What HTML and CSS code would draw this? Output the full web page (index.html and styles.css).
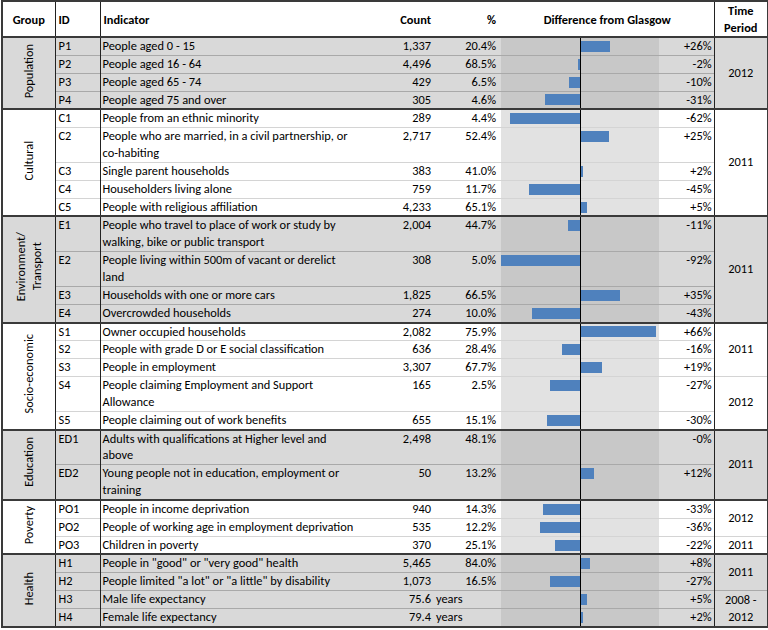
FILE: index.html
```html
<!DOCTYPE html>
<html>
<head>
<meta charset="utf-8">
<link rel="stylesheet" href="styles.css">
</head>
<body>
<table class="tbl">
<colgroup>
<col class="c-group"><col class="c-id"><col class="c-ind"><col class="c-count"><col class="c-pct"><col class="c-neg"><col class="c-pos"><col class="c-diff"><col class="c-time">
</colgroup>
<thead>
<tr class="head">
<th class="h-group">Group</th>
<th class="h-id">ID</th>
<th class="h-ind">Indicator</th>
<th class="h-num">Count</th>
<th class="h-pct">%</th>
<th class="h-diff" colspan="3">Difference from Glasgow</th>
<th class="h-time">Time<br>Period</th>
</tr>
</thead>

<tbody class="grp gray">
<tr><td class="grpname" rowspan="4"><span class="vt">Population</span></td><td class="id">P1</td><td class="ind">People aged 0 - 15</td><td class="num">1,337</td><td class="pct">20.4%</td><td class="neg"><div class="bw"></div></td><td class="pos"><div class="bw"><span class="bar" style="width:29px"></span></div></td><td class="diff">+26%</td><td class="time" rowspan="4">2012</td></tr>
<tr><td class="id">P2</td><td class="ind">People aged 16 - 64</td><td class="num">4,496</td><td class="pct">68.5%</td><td class="neg"><div class="bw"><span class="bar" style="width:2px"></span></div></td><td class="pos"><div class="bw"></div></td><td class="diff">-2%</td></tr>
<tr><td class="id">P3</td><td class="ind">People aged 65 - 74</td><td class="num">429</td><td class="pct">6.5%</td><td class="neg"><div class="bw"><span class="bar" style="width:11px"></span></div></td><td class="pos"><div class="bw"></div></td><td class="diff">-10%</td></tr>
<tr><td class="id">P4</td><td class="ind">People aged 75 and over</td><td class="num">305</td><td class="pct">4.6%</td><td class="neg"><div class="bw"><span class="bar" style="width:35px"></span></div></td><td class="pos"><div class="bw"></div></td><td class="diff">-31%</td></tr>
</tbody>

<tbody class="grp white">
<tr><td class="grpname" rowspan="5"><span class="vt">Cultural</span></td><td class="id">C1</td><td class="ind">People from an ethnic minority</td><td class="num">289</td><td class="pct">4.4%</td><td class="neg"><div class="bw"><span class="bar" style="width:70px"></span></div></td><td class="pos"><div class="bw"></div></td><td class="diff">-62%</td><td class="time" rowspan="5">2011</td></tr>
<tr><td class="id">C2</td><td class="ind">People who are married, in a civil partnership, or<br>co-habiting</td><td class="num">2,717</td><td class="pct">52.4%</td><td class="neg"><div class="bw"></div></td><td class="pos"><div class="bw"><span class="bar" style="width:28px"></span></div></td><td class="diff">+25%</td></tr>
<tr><td class="id">C3</td><td class="ind">Single parent households</td><td class="num">383</td><td class="pct">41.0%</td><td class="neg"><div class="bw"></div></td><td class="pos"><div class="bw"><span class="bar" style="width:2px"></span></div></td><td class="diff">+2%</td></tr>
<tr><td class="id">C4</td><td class="ind">Householders living alone</td><td class="num">759</td><td class="pct">11.7%</td><td class="neg"><div class="bw"><span class="bar" style="width:51px"></span></div></td><td class="pos"><div class="bw"></div></td><td class="diff">-45%</td></tr>
<tr><td class="id">C5</td><td class="ind">People with religious affiliation</td><td class="num">4,233</td><td class="pct">65.1%</td><td class="neg"><div class="bw"></div></td><td class="pos"><div class="bw"><span class="bar" style="width:6px"></span></div></td><td class="diff">+5%</td></tr>
</tbody>

<tbody class="grp gray">
<tr><td class="grpname" rowspan="4"><span class="vt">Environment/<br>Transport</span></td><td class="id">E1</td><td class="ind">People who travel to place of work or study by<br>walking, bike or public transport</td><td class="num">2,004</td><td class="pct">44.7%</td><td class="neg"><div class="bw"><span class="bar" style="width:12px"></span></div></td><td class="pos"><div class="bw"></div></td><td class="diff">-11%</td><td class="time" rowspan="4">2011</td></tr>
<tr><td class="id">E2</td><td class="ind">People living within 500m of vacant or derelict<br>land</td><td class="num">308</td><td class="pct">5.0%</td><td class="neg"><div class="bw"><span class="bar" style="width:79px"></span></div></td><td class="pos"><div class="bw"></div></td><td class="diff">-92%</td></tr>
<tr><td class="id">E3</td><td class="ind">Households with one or more cars</td><td class="num">1,825</td><td class="pct">66.5%</td><td class="neg"><div class="bw"></div></td><td class="pos"><div class="bw"><span class="bar" style="width:39px"></span></div></td><td class="diff">+35%</td></tr>
<tr><td class="id">E4</td><td class="ind">Overcrowded households</td><td class="num">274</td><td class="pct">10.0%</td><td class="neg"><div class="bw"><span class="bar" style="width:48px"></span></div></td><td class="pos"><div class="bw"></div></td><td class="diff">-43%</td></tr>
</tbody>

<tbody class="grp white">
<tr><td class="grpname" rowspan="5"><span class="vt">Socio-economic</span></td><td class="id">S1</td><td class="ind">Owner occupied households</td><td class="num">2,082</td><td class="pct">75.9%</td><td class="neg"><div class="bw"></div></td><td class="pos"><div class="bw"><span class="bar" style="width:75px"></span></div></td><td class="diff">+66%</td><td class="time" rowspan="3">2011</td></tr>
<tr><td class="id">S2</td><td class="ind">People with grade D or E social classification</td><td class="num">636</td><td class="pct">28.4%</td><td class="neg"><div class="bw"><span class="bar" style="width:18px"></span></div></td><td class="pos"><div class="bw"></div></td><td class="diff">-16%</td></tr>
<tr><td class="id">S3</td><td class="ind">People in employment</td><td class="num">3,307</td><td class="pct">67.7%</td><td class="neg"><div class="bw"></div></td><td class="pos"><div class="bw"><span class="bar" style="width:21px"></span></div></td><td class="diff">+19%</td></tr>
<tr><td class="id">S4</td><td class="ind">People claiming Employment and Support<br>Allowance</td><td class="num">165</td><td class="pct">2.5%</td><td class="neg"><div class="bw"><span class="bar" style="width:30px"></span></div></td><td class="pos"><div class="bw"></div></td><td class="diff">-27%</td><td class="time" rowspan="2">2012</td></tr>
<tr><td class="id">S5</td><td class="ind">People claiming out of work benefits</td><td class="num">655</td><td class="pct">15.1%</td><td class="neg"><div class="bw"><span class="bar" style="width:33px"></span></div></td><td class="pos"><div class="bw"></div></td><td class="diff">-30%</td></tr>
</tbody>

<tbody class="grp gray">
<tr><td class="grpname" rowspan="2"><span class="vt">Education</span></td><td class="id">ED1</td><td class="ind">Adults with qualifications at Higher level and<br>above</td><td class="num">2,498</td><td class="pct">48.1%</td><td class="neg"><div class="bw"></div></td><td class="pos"><div class="bw"></div></td><td class="diff">-0%</td><td class="time" rowspan="2">2011</td></tr>
<tr><td class="id">ED2</td><td class="ind">Young people not in education, employment or<br>training</td><td class="num">50</td><td class="pct">13.2%</td><td class="neg"><div class="bw"></div></td><td class="pos"><div class="bw"><span class="bar" style="width:13px"></span></div></td><td class="diff">+12%</td></tr>
</tbody>

<tbody class="grp white">
<tr><td class="grpname" rowspan="3"><span class="vt">Poverty</span></td><td class="id">PO1</td><td class="ind">People in income deprivation</td><td class="num">940</td><td class="pct">14.3%</td><td class="neg"><div class="bw"><span class="bar" style="width:37px"></span></div></td><td class="pos"><div class="bw"></div></td><td class="diff">-33%</td><td class="time" rowspan="2">2012</td></tr>
<tr><td class="id">PO2</td><td class="ind">People of working age in employment deprivation</td><td class="num">535</td><td class="pct">12.2%</td><td class="neg"><div class="bw"><span class="bar" style="width:40px"></span></div></td><td class="pos"><div class="bw"></div></td><td class="diff">-36%</td></tr>
<tr><td class="id">PO3</td><td class="ind">Children in poverty</td><td class="num">370</td><td class="pct">25.1%</td><td class="neg"><div class="bw"><span class="bar" style="width:25px"></span></div></td><td class="pos"><div class="bw"></div></td><td class="diff">-22%</td><td class="time">2011</td></tr>
</tbody>

<tbody class="grp gray">
<tr><td class="grpname" rowspan="4"><span class="vt">Health</span></td><td class="id">H1</td><td class="ind">People in "good" or "very good" health</td><td class="num">5,465</td><td class="pct">84.0%</td><td class="neg"><div class="bw"></div></td><td class="pos"><div class="bw"><span class="bar" style="width:9px"></span></div></td><td class="diff">+8%</td><td class="time" rowspan="2">2011</td></tr>
<tr><td class="id">H2</td><td class="ind">People limited "a lot" or "a little" by disability</td><td class="num">1,073</td><td class="pct">16.5%</td><td class="neg"><div class="bw"><span class="bar" style="width:30px"></span></div></td><td class="pos"><div class="bw"></div></td><td class="diff">-27%</td></tr>
<tr><td class="id">H3</td><td class="ind">Male life expectancy</td><td class="num">75.6</td><td class="unit">years</td><td class="neg"><div class="bw"></div></td><td class="pos"><div class="bw"><span class="bar" style="width:6px"></span></div></td><td class="diff">+5%</td><td class="time" rowspan="2">2008 -<br>2012</td></tr>
<tr><td class="id">H4</td><td class="ind">Female life expectancy</td><td class="num">79.4</td><td class="unit">years</td><td class="neg"><div class="bw"></div></td><td class="pos"><div class="bw"><span class="bar" style="width:2px"></span></div></td><td class="diff">+2%</td></tr>
</tbody>
</table>
</body>
</html>
```

FILE: styles.css
```css
html, body {
  margin: 0;
  padding: 0;
  background: #fff;
}
body {
  font-family: Carlito, Lato, "Liberation Sans", sans-serif;
  font-size: 12.4px;
  color: #000;
}
.tbl {
  border-collapse: collapse;
  table-layout: fixed;
  width: 766px;
  margin: 0 0 0 1px;
  border: 2px solid #3a3a3a;
}
.c-group { width: 53px; }
.c-id { width: 45px; }
.c-ind { width: 281px; }
.c-count { width: 53px; }
.c-pct { width: 67px; }
.c-neg { width: 79px; }
.c-pos { width: 79px; }
.c-diff { width: 55px; }
.c-time { width: 54px; }

.head th {
  height: 31px;
  padding: 0 3px;
  font-weight: bold;
  vertical-align: middle;
  line-height: 17px;
  white-space: nowrap;
  background: #fff;
}
.h-group { text-align: center; border-right: 1px solid #222; }
.h-id { text-align: left; border-right: 1px solid #222; }
.h-ind { text-align: left; }
.h-num { text-align: right; }
.h-pct { text-align: right; padding-right: 5px !important; }
.h-diff { text-align: center; border-right: 1px solid #222; }
.h-time { text-align: center; }

.grp { border-top: 2px solid #3a3a3a; }
.grp td {
  padding: 0;
  line-height: 16.85px;
  vertical-align: top;
  white-space: nowrap;
}
.gray td { background: #d9d9d9; }
.white td { background: #fff; }
.gray tr + tr td { border-top: 1px solid #a9a9a9; }
.white tr + tr td { border-top: 1px solid #d4d4d4; }

.grp td.grpname {
  text-align: center;
  vertical-align: middle;
  border-right: 1px solid #222;
}
.vt {
  display: inline-block;
  writing-mode: vertical-rl;
  transform: rotate(180deg);
  line-height: 16px;
}
.grp td.id {
  padding-left: 3px;
  border-right: 1px solid #222;
}
.grp td.ind { padding-left: 2px; }
.grp td.num { text-align: right; padding-right: 3px; }
.grp td.pct { text-align: right; padding-right: 5px; }
.grp td.unit { text-align: left; padding-left: 2px; }
.gray td.neg, .gray td.pos { background: #c8c8c8; }
.white td.neg, .white td.pos { background: #e2e2e2; }
.grp td.pos { border-left: 1px solid #000; }
.bw {
  height: 16.85px;
  display: flex;
  align-items: center;
}
.neg .bw { justify-content: flex-end; }
.bar {
  display: block;
  height: 11px;
  background: #4f81bd;
}
.grp td.diff {
  text-align: right;
  padding-right: 2px;
  border-right: 1px solid #222;
}
.grp td.time {
  text-align: center;
  vertical-align: middle;
}
```
